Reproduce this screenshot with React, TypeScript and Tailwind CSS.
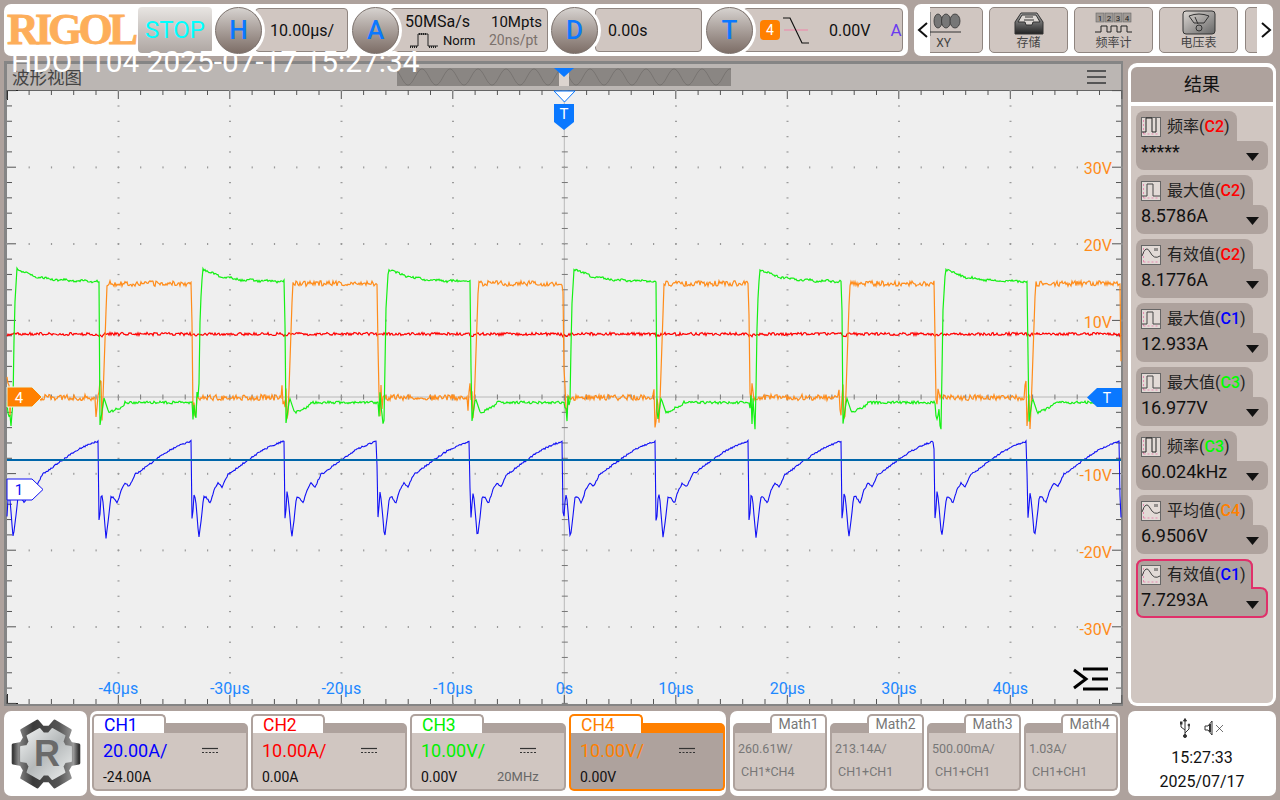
import type { ReactNode } from "react";

const PERIOD = 185.7;
const CENTER_X = 564.3;
const CENTER_Y = 397;
const DIV_X = 111.5;
const DIV_Y = 76.6;

function makeNoise(seed: number) {
  let s = seed;
  return () => {
    s = (s + 0x6d2b79f5) | 0;
    let t = Math.imul(s ^ (s >>> 15), 1 | s);
    t = (t + Math.imul(t ^ (t >>> 7), 61 | t)) ^ t;
    return ((t ^ (t >>> 14)) >>> 0) / 4294967296 - 0.5;
  };
}

const mod = (v: number, m: number) => ((v % m) + m) % m;
const lerp = (a: number, b: number, k: number) => a + (b - a) * k;

function trace(fn: (x: number, n: () => number) => number, seed: number) {
  const noise = makeNoise(seed);
  const pts: string[] = [];
  for (let x = 7; x <= 1121; x += 1) {
    pts.push(`${x.toFixed(2)},${fn(x, noise).toFixed(1)}`);
  }
  return pts.join(" ");
}

const greenY = (x: number, n: () => number) => {
  const t = mod(x - 13, PERIOD);
  if (t < 1.5) return lerp(402, 310, t / 1.5);
  if (t < 4) return lerp(310, 268, (t - 1.5) / 2.5);
  if (t < 86) return 281.5 - 13 * Math.exp(-(t - 4) / 20) + n() * 2.2 + Math.sin(t / 3) * 0.6;
  if (t < 87) return lerp(282, 425, t - 86);
  if (t < 91) return lerp(425, 398, (t - 87) / 4);
  if (t < 96) return lerp(398, 413, (t - 91) / 5);
  if (t < 112) return lerp(413, 405, (t - 96) / 16) + n() * 3;
  if (t > PERIOD - 6) return 412 + n() * 40;
  return 402.5 + n() * 2.6;
};

const orangeY = (x: number, n: () => number) => {
  const u = mod(x - 191.5, PERIOD);
  if (u < 1.5) return lerp(284, 400, u / 1.5);
  if (u < 5) return 400 + n() * 34;
  if (u < 90) return 397.5 + n() * 6;
  if (u < 96) return 405 + n() * 50;
  if (u < 97.2) return lerp(425, 398, (u - 96) / 1.2);
  if (u < 101) return lerp(398, 288, (u - 97.2) / 3.8);
  return 283.5 + n() * 5.5;
};

const redY = (x: number, n: () => number) => {
  const e = mod(x - 98.3, PERIOD / 2);
  return 334 + n() * 3 + (e < 5 ? 1.5 : 0);
};

const BLUE_KEYS: [number, number][] = [
  [0, 441], [0.5, 520], [1.6, 516], [3, 492], [4.5, 500], [7.7, 538], [10, 520], [12.5, 497],
  [15, 497], [19, 503], [23, 490], [27, 483], [31, 487], [37, 474], [41, 472], [50, 465],
  [57, 460], [70, 451], [80, 446], [92.85, 441],
];

const blueY = (x: number, n: () => number) => {
  const v = mod(x - 98.3, PERIOD / 2);
  for (let i = 1; i < BLUE_KEYS.length; i++) {
    const [a, ya] = BLUE_KEYS[i - 1];
    const [b, yb] = BLUE_KEYS[i];
    if (v <= b) return lerp(ya, yb, (v - a) / (b - a)) + n() * 1.6;
  }
  return 441;
};

function Circle({ letter }: { letter: string }) {
  return (
    <div className="relative z-10 w-[47px] h-[47px] shrink-0 rounded-full border border-[#7b716c] bg-gradient-to-b from-[#d6d2cf] to-[#7d6e67] shadow-[0_0_0_3px_white] flex items-center justify-center text-[26px] font-medium text-[#0a78ff]">
      {letter}
    </div>
  );
}

function InfoPanel({ className, children }: { className: string; children: ReactNode }) {
  return (
    <div className={`h-[44px] rounded-[4px] border border-[#8f8580] bg-[#d0c6c1] relative flex items-center ${className}`}>
      {children}
    </div>
  );
}

function Logo() {
  return (
    <div className="ml-[3px] w-[128px] shrink-0 font-['Liberation_Serif',serif] font-bold text-[44px] tracking-[-3.9px] text-[#fdae5a] [-webkit-text-stroke:0.8px_#fdae5a] leading-none">
      RIGOL
    </div>
  );
}

function ToolButton({ label, children }: { label: string; children: ReactNode }) {
  return (
    <div className="w-[79px] h-[46px] shrink-0 rounded-[5px] border border-[#8f8580] bg-[#d0c6c1] flex flex-col items-center">
      <div className="h-[26px] mt-[2px]">{children}</div>
      <div className="text-[12px] leading-[14px] text-[#444]">{label}</div>
    </div>
  );
}

function TopBars() {
  return (
    <div className="flex gap-[6px] h-[52px]">
      <div className="w-[904px] rounded-[7px] bg-white flex items-center overflow-hidden">
        <Logo />
        <div className="ml-[3px] w-[74px] h-[46px] shrink-0 rounded-[4px] bg-gradient-to-b from-[#e8e5e2] to-[#aea6a2] flex items-center justify-center text-[24px] text-[#00ffff]">
          STOP
        </div>
        <div className="ml-[3px]"><Circle letter="H" /></div>
        <InfoPanel className="-ml-[7px] w-[93px] pl-[14px] pt-[1px] text-[16px] text-[#111]">10.00µs/</InfoPanel>
        <div className="ml-[4px]"><Circle letter="A" /></div>
        <InfoPanel className="-ml-[9px] w-[158px]">
          <div className="absolute left-[14px] top-[4px] text-[16px] leading-[18px] text-[#111]">50MSa/s</div>
          <svg className="absolute left-[19px] top-[23px]" width="28" height="16" viewBox="0 0 28 16" fill="none" stroke="#222" strokeWidth="1">
            <path d="M0 14H8V2H18V14H28" />
            <path d="M9 2h8" strokeDasharray="1 1" strokeWidth="2" />
            <path d="M0 15h7M19 15h8" strokeDasharray="1 1" strokeWidth="2" />
          </svg>
          <div className="absolute left-[52px] top-[24px] text-[13px] leading-[15px] text-[#111]">Norm</div>
          <div className="absolute left-[100px] top-[4px] text-[15px] leading-[18px] text-[#111]">10Mpts</div>
          <div className="absolute left-[98px] top-[23px] text-[14px] leading-[16px] text-[#7b716c]">20ns/pt</div>
        </InfoPanel>
        <div className="ml-[3px]"><Circle letter="D" /></div>
        <InfoPanel className="-ml-[3px] w-[107px] pl-[12px] pt-[1px] text-[16px] text-[#111]">0.00s</InfoPanel>
        <div className="ml-[4px]"><Circle letter="T" /></div>
        <InfoPanel className="-ml-[10px] w-[160px] pl-[16px]">
          <div className="w-[20px] h-[20px] rounded-[4px] bg-[#ff8000] flex items-center justify-center text-[14px] text-white">4</div>
          <svg className="ml-[3px]" width="26" height="28" viewBox="0 0 26 28" fill="none">
            <path d="M1 14H25" stroke="#e0a5b5" strokeWidth="2" />
            <path d="M0 2H7L19 27H26" stroke="#111" strokeWidth="1.2" />
          </svg>
          <div className="ml-[20px] pt-[1px] text-[16px] text-[#111]">0.00V</div>
          <div className="ml-[20px] pt-[1px] text-[17px] text-[#6a3cf0]">A</div>
        </InfoPanel>
      </div>
      <div className="w-[359px] rounded-[7px] bg-white flex items-center">
        <svg className="ml-[3px] shrink-0" width="12" height="20" viewBox="0 0 12 20" fill="none" stroke="#111" strokeWidth="2">
          <path d="M10 3L2 10L10 17" />
        </svg>
        <div className="w-[327px] ml-[1px] overflow-hidden">
          <div className="flex gap-[6px] -ml-[26px] w-[420px]">
            <ToolButton label="XY">
              <svg width="38" height="26" viewBox="0 0 38 26" fill="#777" stroke="#333" strokeWidth="0.8">
                <path d="M5 2V27" stroke="#777" strokeWidth="1.5" />
                <path d="M3 22H36" strokeWidth="1" />
                <ellipse cx="13" cy="11" rx="4" ry="7" />
                <ellipse cx="21" cy="11" rx="4.5" ry="7" />
                <ellipse cx="30" cy="11" rx="5" ry="7" />
              </svg>
            </ToolButton>
            <ToolButton label="存储">
              <svg width="30" height="26" viewBox="0 0 30 26">
                <defs>
                  <linearGradient id="tray" x1="0" y1="0" x2="0" y2="1">
                    <stop offset="0" stopColor="#aaa" />
                    <stop offset="1" stopColor="#222" />
                  </linearGradient>
                </defs>
                <path d="M7 3H23L29 12V24H1V12Z" fill="url(#tray)" stroke="#333" />
                <path d="M8 5H22L26 12H19L18 15H12L11 12H4Z" fill="#ddd8d4" stroke="#333" />
                <path d="M11 7H19M10 10H20" stroke="#333" />
              </svg>
            </ToolButton>
            <ToolButton label="频率计">
              <svg width="38" height="26" viewBox="0 0 38 26" fill="none">
                {[0, 9, 18, 27].map((x, i) => (
                  <g key={x}>
                    <rect x={x + 1} y="3" width="8" height="9" fill="#a09a96" stroke="#666" strokeWidth="0.6" />
                    <text x={x + 5} y="11" textAnchor="middle" fontSize="8" fill="#222">{i + 1}</text>
                  </g>
                ))}
                <path d="M0 22H6V16H12V22H16V16H22V22H26V16H32V22H37" stroke="#222" />
              </svg>
            </ToolButton>
            <div className="w-[80px] shrink-0">
              <ToolButton label="电压表">
                <svg width="34" height="26" viewBox="0 0 34 26" fill="none">
                  <defs>
                    <linearGradient id="gauge" x1="0" y1="0" x2="1" y2="1">
                      <stop offset="0" stopColor="#ddd8d4" />
                      <stop offset="1" stopColor="#666" />
                    </linearGradient>
                  </defs>
                  <rect x="1" y="1" width="32" height="23" rx="3" fill="url(#gauge)" stroke="#333" />
                  <path d="M7 6Q17 2 27 6L22 13H12Z" stroke="#333" />
                  <circle cx="17" cy="18" r="3" stroke="#333" />
                  <path d="M16 14L13 7" stroke="#333" />
                </svg>
              </ToolButton>
            </div>
            <ToolButton label=""><span /></ToolButton>
          </div>
        </div>
        <svg className="ml-[3px] shrink-0" width="12" height="20" viewBox="0 0 12 20" fill="none" stroke="#111" strokeWidth="2">
          <path d="M2 3L10 10L2 17" />
        </svg>
      </div>
    </div>
  );
}

function Minimap() {
  let d = "";
  for (let x = 0; x <= 334; x += 1) {
    d += `${x === 0 ? "M" : "L"}${x} ${(9 + 8 * Math.cos(((x - 11) / 28) * 2 * Math.PI)).toFixed(1)}`;
  }
  return (
    <svg className="shrink-0" width="334" height="18" viewBox="0 0 334 18">
      <rect width="334" height="18" fill="#8a8683" />
      <path d={d} fill="none" stroke="#726e6c" strokeWidth="0.8" />
      <rect x="162" y="0" width="10" height="18" fill="#dcd4cf" />
      <path d="M157 0H177L167 9Z" fill="#0a78ff" />
    </svg>
  );
}

function WaveHeader() {
  return (
    <div className="h-[26px] bg-[#bbb6b3] flex items-center">
      <div className="w-[390px] pl-[5px] pt-[3px] text-[17.5px] text-[#444] leading-none">波形视图</div>
      <Minimap />
      <div className="ml-[356px] flex flex-col gap-[4px]">
        <div className="w-[19px] h-[2px] bg-[#555]" />
        <div className="w-[19px] h-[2px] bg-[#555]" />
        <div className="w-[19px] h-[2px] bg-[#555]" />
      </div>
    </div>
  );
}

function Grid() {
  const els: ReactNode[] = [];
  const stepX = DIV_X / 5;
  const stepY = DIV_Y / 5;
  for (let i = -25; i <= 25; i++) {
    const x = CENTER_X + i * stepX;
    const major = i % 5 === 0;
    const h = major ? 9 : 5;
    els.push(<rect key={`t${i}`} x={x - 0.5} y={90} width={1} height={h} fill="#555" />);
    els.push(<rect key={`b${i}`} x={x - 0.5} y={704 - h} width={1} height={h} fill="#555" />);
    els.push(<rect key={`c${i}`} x={x - 0.5} y={CENTER_Y - 2.5} width={1} height={major ? 6 : 5} fill="#777" />);
  }
  for (let j = -20; j <= 20; j++) {
    const y = CENTER_Y + j * stepY;
    const major = j % 5 === 0;
    const w = major ? 9 : 5;
    els.push(<rect key={`l${j}`} x={7} y={y - 0.5} width={w} height={1} fill="#555" />);
    els.push(<rect key={`r${j}`} x={1121 - w} y={y - 0.5} width={w} height={1} fill="#555" />);
    els.push(<rect key={`m${j}`} x={CENTER_X - 2.5} y={y - 0.5} width={6} height={1} fill="#777" />);
  }
  for (let k = -4; k <= 4; k++) {
    if (k === 0) continue;
    const x = CENTER_X + k * DIV_X;
    for (let j = -20; j <= 20; j++) {
      els.push(<rect key={`dv${k}${j}`} x={x - 0.8} y={CENTER_Y + j * stepY - 0.5} width={2} height={1.2} fill="#999" />);
    }
  }
  for (let k = -3; k <= 3; k++) {
    if (k === 0) continue;
    const y = CENTER_Y + k * DIV_Y;
    for (let i = -25; i <= 25; i++) {
      els.push(<rect key={`dh${k}${i}`} x={CENTER_X + i * stepX - 0.5} y={y - 0.8} width={1.2} height={2} fill="#999" />);
    }
  }
  return <g>{els}</g>;
}

const TIME_LABELS = ["-40µs", "-30µs", "-20µs", "-10µs", "0s", "10µs", "20µs", "30µs", "40µs"];
const VOLT_LABELS: [string, number][] = [
  ["30V", 168], ["20V", 245], ["10V", 322], ["-10V", 475], ["-20V", 552], ["-30V", 629],
];

function Plot() {
  return (
    <svg className="block overflow-visible" width="1114" height="614" viewBox="7 90 1114 614">
      <rect x="7" y="90" width="1114" height="614" fill="#efefef" />
      <path d="M7 90.5H1121" stroke="#666" />
      <path d="M7.5 100V90.5H18M7.5 694V703.5H18" fill="none" stroke="#222" />
      <path d={`M7 ${CENTER_Y}H1121`} stroke="#b8b8b8" />
      <path d={`M${CENTER_X} 90V704`} stroke="#b8b8b8" />
      <Grid />
      <polyline points={trace(redY, 3)} fill="none" stroke="#ff0000" strokeWidth="1.2" />
      <polyline points={trace(orangeY, 7)} fill="none" stroke="#ff8c1a" strokeWidth="1.2" />
      <polyline points={trace(greenY, 11)} fill="none" stroke="#14f014" strokeWidth="1.2" />
      <polyline points={trace(blueY, 17)} fill="none" stroke="#1010f5" strokeWidth="1.1" />
      <path d="M7 460H1121" stroke="#0066aa" strokeWidth="2" />

      {TIME_LABELS.map((t, i) => (
        <text key={t} x={CENTER_X + (i - 4) * DIV_X} y="694" textAnchor="middle" fontSize="16" fill="#1e88ff">{t}</text>
      ))}
      {VOLT_LABELS.map(([t, y]) => (
        <text key={t} x="1112" y={y + 5.5} textAnchor="end" fontSize="16" fill="#ff8c1a">{t}</text>
      ))}

      <path d="M554 91H575L564.5 102Z" fill="#fff" stroke="#0a78ff" />
      <path d="M554 104H574V122L564 130L554 122Z" fill="#0a78ff" />
      <text x="564" y="119" textAnchor="middle" fontSize="15" fill="#fff">T</text>

      <path d="M7 387H32L42 397L32 407H7Z" fill="#ff8000" stroke="#e8f4e0" />
      <text x="19" y="403" textAnchor="middle" fontSize="15" fill="#fff">4</text>
      <path d="M7 479H32L43 489.5L32 500H7Z" fill="#fff" stroke="#1010f5" />
      <text x="19" y="495" textAnchor="middle" fontSize="15" fill="#1010f5">1</text>
      <path d="M1122 388H1097L1087 397.5L1097 407H1122Z" fill="#0a78ff" />
      <text x="1107" y="403" textAnchor="middle" fontSize="14" fill="#fff">T</text>

      <path d="M1074 670L1086 679L1074 688" fill="none" stroke="#000" strokeWidth="3" />
      <path d="M1083 669H1108M1092 679H1108M1083 689H1108" fill="none" stroke="#000" strokeWidth="3" />
    </svg>
  );
}

const PINK = "#e58bb0";

function MeasureIcon({ kind }: { kind: "freq" | "max" | "rms" }) {
  return (
    <svg className="shrink-0" width="20" height="20" viewBox="0 0 20 20" fill="none">
      <rect x="0.5" y="0.5" width="19" height="19" fill="#e2dad6" stroke="#666" />
      <path d="M2.5 3V17M2.5 17H17" stroke={PINK} strokeDasharray="2 2" />
      {kind === "freq" && <path d="M1 15H5V1H11V15H15V1" stroke="#222" />}
      {kind === "max" && <path d="M1 15H6V3H12V15H19" stroke="#444" />}
      {kind === "rms" && <path d="M1 11Q5 -1 9 7T19 11M14 3V6M16 3V6" stroke="#444" />}
    </svg>
  );
}

type Measure = {
  name: string;
  ch: string;
  chClass: string;
  value: string;
  kind: "freq" | "max" | "rms";
};

const MEASURES: Measure[] = [
  { name: "频率", ch: "C2", chClass: "text-[#ff0000]", value: "*****", kind: "freq" },
  { name: "最大值", ch: "C2", chClass: "text-[#ff0000]", value: "8.5786A", kind: "max" },
  { name: "有效值", ch: "C2", chClass: "text-[#ff0000]", value: "8.1776A", kind: "rms" },
  { name: "最大值", ch: "C1", chClass: "text-[#0000ff]", value: "12.933A", kind: "max" },
  { name: "最大值", ch: "C3", chClass: "text-[#00ff00]", value: "16.977V", kind: "max" },
  { name: "频率", ch: "C3", chClass: "text-[#00ff00]", value: "60.024kHz", kind: "freq" },
  { name: "平均值", ch: "C4", chClass: "text-[#ff8000]", value: "6.9506V", kind: "rms" },
  { name: "有效值", ch: "C1", chClass: "text-[#0000ff]", value: "7.7293A", kind: "rms" },
];

function MeasureItem({ m, selected }: { m: Measure; selected: boolean }) {
  return (
    <div className="relative w-[132px] h-[59px]">
      <div className={`h-[30px] rounded-t-[8px] bg-[#aea29d] flex items-center pl-[5px] pt-[1px] text-[16px] text-[#222] ${m.name === "频率" ? "w-[101px]" : "w-[117px]"}`}>
        <MeasureIcon kind={m.kind} />
        <span className="ml-[6px] pt-[1px] whitespace-nowrap">
          {m.name}(<span className={`font-medium ${m.chClass}`}>{m.ch}</span>)
        </span>
      </div>
      <div className="h-[29px] rounded-b-[8px] rounded-tr-[8px] bg-[#aea29d] flex items-center justify-between pl-[5px] pr-[9px] text-[18px] text-[#111] leading-none">
        <span className="-mt-[8px]">{m.value}</span>
        <svg className="mt-[2px]" width="13" height="8" viewBox="0 0 13 8"><path d="M0 0H13L6.5 8Z" fill="#111" /></svg>
      </div>
      {selected && (
        <svg className="absolute left-0 top-0" width="132" height="59" viewBox="0 0 132 59" fill="none">
          <path d="M8 1H109Q116 1 116 8V29H124Q131 29 131 36V51Q131 58 124 58H8Q1 58 1 51V8Q1 1 8 1Z" stroke="#e0306a" strokeWidth="2" />
        </svg>
      )}
    </div>
  );
}

function ResultPanel() {
  return (
    <div className="mt-[2px] w-[148px] h-[643px] rounded-[9px] bg-white p-[3px] flex flex-col">
      <div className="h-[35px] mt-[1px] rounded-t-[6px] bg-[#aea29d] flex items-center justify-center text-[18px] text-[#111]">结果</div>
      <div className="mt-[4px] flex-1 rounded-b-[6px] bg-[#d0c6c1] pl-[5px] pt-[5px] flex flex-col gap-[5px]">
        {MEASURES.map((m, i) => (
          <MeasureItem key={i} m={m} selected={i === MEASURES.length - 1} />
        ))}
      </div>
    </div>
  );
}

function gearPath(scale: number) {
  const pts: string[] = [];
  for (let i = 0; i < 6; i++) {
    const a = (i * Math.PI) / 3;
    const at = (r: number, off: number) =>
      `${(36 + scale * r * Math.cos(a + off)).toFixed(1)} ${(36 + scale * r * Math.sin(a + off)).toFixed(1)}`;
    pts.push(at(27, -0.4), at(34, -0.27), at(34, 0.27), at(27, 0.4));
  }
  return `M${pts.join("L")}Z`;
}

function GearLogo() {
  return (
    <svg width="72" height="72" viewBox="0 0 72 72">
      <defs>
        <linearGradient id="gearOuter" x1="0" y1="0" x2="1" y2="0">
          <stop offset="0" stopColor="#3a3a3a" />
          <stop offset="0.08" stopColor="#888" />
          <stop offset="0.3" stopColor="#3a3a3a" />
          <stop offset="0.7" stopColor="#555" />
          <stop offset="0.92" stopColor="#999" />
          <stop offset="1" stopColor="#333" />
        </linearGradient>
        <linearGradient id="gearInner" x1="0" y1="0" x2="1" y2="1">
          <stop offset="0" stopColor="#f2f4f4" />
          <stop offset="0.5" stopColor="#b5b9ba" />
          <stop offset="1" stopColor="#eceeee" />
        </linearGradient>
      </defs>
      <path d={gearPath(1)} fill="url(#gearOuter)" stroke="url(#gearOuter)" strokeWidth="3" strokeLinejoin="round" />
      <path d={gearPath(0.76)} fill="url(#gearInner)" stroke="url(#gearInner)" strokeWidth="2" strokeLinejoin="round" />
      <text x="37" y="48" textAnchor="middle" fontSize="36" fontWeight="bold" fill="#6a6a6a" fontFamily="Liberation Sans">R</text>
    </svg>
  );
}

type Channel = {
  name: string;
  scale: string;
  offset: string;
  colorClass: string;
  extra?: string;
  active?: boolean;
};

const CHANNELS: Channel[] = [
  { name: "CH1", scale: "20.00A/", offset: "-24.00A", colorClass: "text-[#0000ff]" },
  { name: "CH2", scale: "10.00A/", offset: "0.00A", colorClass: "text-[#ff0000]" },
  { name: "CH3", scale: "10.00V/", offset: "0.00V", colorClass: "text-[#00f000]", extra: "20MHz" },
  { name: "CH4", scale: "10.00V/", offset: "0.00V", colorClass: "text-[#ff8000]", active: true },
];

function DcIcon() {
  return (
    <svg width="16" height="7" viewBox="0 0 16 7" fill="none" stroke="#333">
      <path d="M0 1.5H16" strokeWidth="1.2" />
      <path d="M0 5.5H16" strokeWidth="1.2" strokeDasharray="2 1.5" />
    </svg>
  );
}

function ChannelCard({ c }: { c: Channel }) {
  const edge = c.active ? "border-[#ff8000]" : "border-[#aea29d]";
  return (
    <div className="w-[156px] h-[77px] flex flex-col shrink-0">
      <div className="flex h-[19px]">
        <div className={`w-[74px] rounded-t-[5px] border-2 border-b-0 ${edge} bg-white pl-[10px] text-[17.5px] leading-[18px] ${c.colorClass}`}>
          {c.name}
        </div>
        <div className={`flex-1 mt-[9px] rounded-tr-[5px] ${c.active ? "bg-[#ff8000]" : "bg-[#aea29d]"}`} />
      </div>
      <div className={`flex-1 rounded-b-[5px] border-2 border-t-0 ${edge} ${c.active ? "bg-[#aea29d]" : "bg-[#d0c6c1]"} pl-[9px]`}>
        <div className="flex items-center h-[35px]">
          <div className={`w-[99px] text-[18px] ${c.colorClass}`}>{c.scale}</div>
          <DcIcon />
        </div>
        <div className="flex items-center text-[14px] leading-[16px] pt-[1px] text-[#111]">
          <div className="w-[76px]">{c.offset}</div>
          {c.extra && <div className="text-[13px] text-[#666]">{c.extra}</div>}
        </div>
      </div>
    </div>
  );
}

const MATHS = [
  { name: "Math1", scale: "260.61W/", src: "CH1*CH4" },
  { name: "Math2", scale: "213.14A/", src: "CH1+CH1" },
  { name: "Math3", scale: "500.00mA/", src: "CH1+CH1" },
  { name: "Math4", scale: "1.03A/", src: "CH1+CH1" },
];

function MathCard({ m }: { m: (typeof MATHS)[number] }) {
  return (
    <div className="w-[94px] h-[77px] flex flex-col shrink-0">
      <div className="flex h-[19px]">
        <div className="flex-1 mt-[9px] rounded-tl-[5px] bg-[#aea29d]" />
        <div className="w-[57px] rounded-t-[5px] border-2 border-b-0 border-[#aea29d] bg-white text-center text-[14px] leading-[17px] text-[#777]">
          {m.name}
        </div>
      </div>
      <div className="flex-1 rounded-b-[5px] border-2 border-t-0 border-[#aea29d] bg-[#d0c6c1] pl-[3px] text-[12.5px] text-[#777]">
        <div className="h-[24px] flex items-center mt-[4px] whitespace-nowrap">{m.scale}</div>
        <div className="pl-[3px] leading-[22px]">{m.src}</div>
      </div>
    </div>
  );
}

function BottomBar() {
  return (
    <div className="flex h-[85px]">
      <div className="w-[83px] rounded-[7px] bg-white flex items-center justify-center">
        <GearLogo />
      </div>
      <div className="ml-[3px] w-[636px] rounded-[7px] bg-white flex gap-[3px] pl-[2px] pt-[3px]">
        {CHANNELS.map((c) => (
          <ChannelCard key={c.name} c={c} />
        ))}
      </div>
      <div className="ml-[4px] w-[390px] rounded-[7px] bg-white flex gap-[3px] pl-[3px] pt-[3px]">
        {MATHS.map((m) => (
          <MathCard key={m.name} m={m} />
        ))}
      </div>
      <div className="ml-[8px] w-[148px] rounded-[7px] bg-white flex flex-col items-center text-[16px] text-[#111]">
        <div className="flex items-center gap-[14px] h-[32px] mt-[1px]">
          <svg width="10" height="20" viewBox="0 0 10 20" fill="none" stroke="#333">
            <path d="M5 1V18M5 12L1 9V6M5 15L9 11V8" />
            <path d="M3.5 3H6.5L5 0.5Z" fill="#333" />
            <circle cx="5" cy="18" r="1.5" fill="#333" />
            <rect x="0" y="4" width="2" height="2" fill="#333" />
            <circle cx="9" cy="7" r="1" fill="#333" />
          </svg>
          <svg width="20" height="18" viewBox="0 0 20 18" fill="none" stroke="#333">
            <path d="M1 7V11H4L8 16V2L4 7Z" />
            <path d="M6 5V13" strokeWidth="2" />
            <path d="M12 6L19 13M19 6L12 13" strokeWidth="0.7" />
          </svg>
        </div>
        <div className="mt-[3px] leading-[22px]">15:27:33</div>
        <div className="mt-[2px] leading-[22px]">2025/07/17</div>
      </div>
    </div>
  );
}

export default function App() {
  return (
    <div className="relative w-[1280px] h-[800px] overflow-hidden bg-[#aea29d] pt-[4px] pl-[4px] flex flex-col gap-[5px] font-['Roboto','Noto_Sans_CJK_SC',sans-serif]">
      <TopBars />
      <div className="flex gap-[5px] h-[645px]">
        <div className="w-[1119px] border-t-[3px] border-l-[3px] border-r-[2px] border-b-[2px] border-[#858585]">
          <WaveHeader />
          <Plot />
        </div>
        <ResultPanel />
      </div>
      <BottomBar />
      <div className="absolute left-[11px] top-[44px] text-[29.8px] leading-[36px] text-white whitespace-nowrap">
        HDO1104 2025-07-17 15:27:34
      </div>
    </div>
  );
}
